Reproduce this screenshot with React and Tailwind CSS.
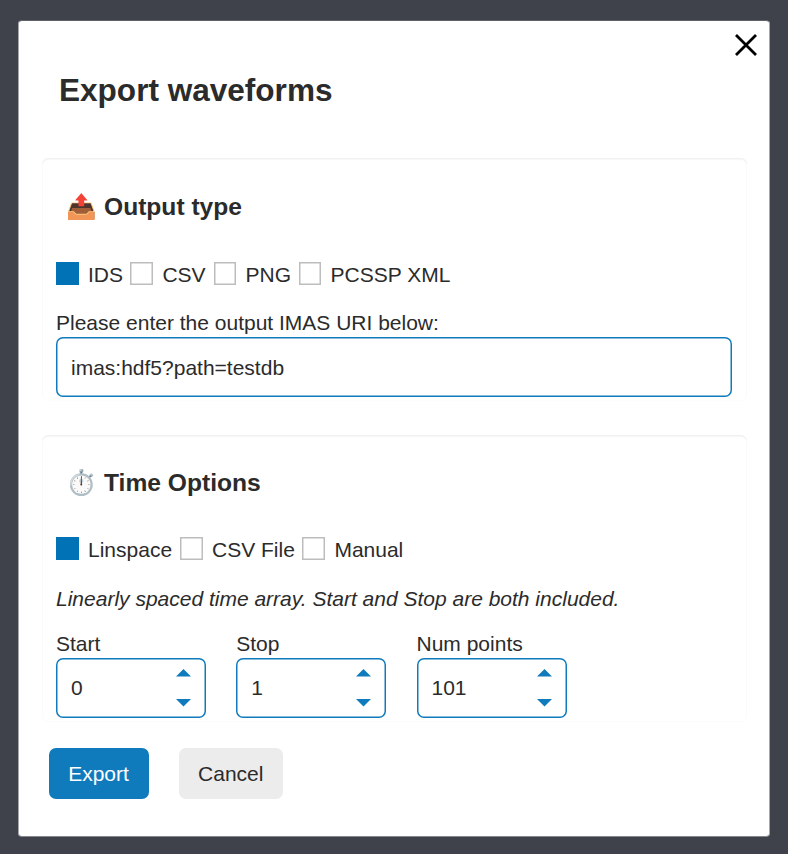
import React from "react";

function CheckItem({ label, checked, width }) {
  return (
    <label className={`flex h-[24px] shrink-0 items-start gap-[9.5px] ${width}`}>
      <span
        className={`h-[22.5px] w-[22.5px] shrink-0 ${
          checked ? "bg-[#0072b5]" : "bg-white shadow-[inset_0_0_0_1.5px_#bdbdbd]"
        }`}
      />
      <span className="whitespace-nowrap leading-[26px]">{label}</span>
    </label>
  );
}

function Card({ icon, title, className, children }) {
  return (
    <section
      className={`rounded-[6px] px-[14.5px] shadow-[inset_0_1.5px_1.5px_#f0f0f0,inset_0_0_0_1px_#fcfcfc] ${className}`}
    >
      <h2 className="flex h-[30px] items-center pl-[10px] text-[24.6px] font-bold leading-[30px]">
        <span className="flex w-[38px] shrink-0">{icon}</span>
        {title}
      </h2>
      {children}
    </section>
  );
}

function Spinner({ label, value }) {
  return (
    <div className="w-[150px]">
      <div className="h-[24px] whitespace-nowrap leading-[25px]">{label}</div>
      <div className="mt-[3px] flex h-[60px] items-center justify-between rounded-[7px] pl-[15px] pr-[15px] shadow-[inset_0_0_0_1.5px_#107bbc]">
        <span>{value}</span>
        <div className="flex flex-col gap-[22.5px]">
          <svg width="15" height="7.5" viewBox="0 0 15 7.5" fill="#107bbc">
            <path d="M0 7.5 7.5 0 15 7.5z" />
          </svg>
          <svg width="15" height="7.5" viewBox="0 0 15 7.5" fill="#107bbc">
            <path d="M0 0h15L7.5 7.5z" />
          </svg>
        </div>
      </div>
    </div>
  );
}

export default function App() {
  return (
    <div className="h-[854px] w-[788px] bg-[#40424b] px-[18px] pt-[20px] font-['Liberation_Sans',Arial,sans-serif] text-[21px] text-[#2b2b2b]">
      <main className="relative h-[817px] rounded-[4px] border border-b-[#85878d] border-l-[#a5a7ad] border-r-[#a5a7ad] border-t-[#5f616a] bg-white px-[22.5px] pt-[49px]">
        <button className="absolute right-[11px] top-[12px]" aria-label="Close">
          <svg width="24" height="24" viewBox="0 0 24 24" fill="none" stroke="#000" strokeWidth="2.8">
            <path d="M2 2 22 22M22 2 2 22" />
          </svg>
        </button>
        <h1 className="h-[40px] pl-[17.5px] text-[31.55px] font-bold leading-[40px]">Export waveforms</h1>

        <Card icon="📤" title="Output type" className="mt-[48px] h-[243px] pt-[34px]">
          <div className="mt-[40px] flex">
            <CheckItem label="IDS" checked width="w-[74.4px]" />
            <CheckItem label="CSV" width="w-[83.2px]" />
            <CheckItem label="PNG" width="w-[85px]" />
            <CheckItem label="PCSSP XML" width="w-[160px]" />
          </div>
          <div className="mt-[24px] h-[24px] leading-[26px]">Please enter the output IMAS URI below:</div>
          <div className="mt-[3px] flex h-[60px] items-center rounded-[7px] px-[15px] pt-px shadow-[inset_0_0_0_1.5px_#107bbc]">
            imas:hdf5?path=testdb
          </div>
        </Card>

        <Card icon="⏱️" title="Time Options" className="mt-[33.5px] h-[287px] pt-[33px]">
          <div className="mt-[39.5px] flex">
            <CheckItem label="Linspace" checked width="w-[124px]" />
            <CheckItem label="CSV File" width="w-[122.4px]" />
            <CheckItem label="Manual" width="w-[120px]" />
          </div>
          <div className="mt-[24.5px] h-[24px] italic leading-[25px]">
            Linearly spaced time array. Start and Stop are both included.
          </div>
          <div className="mt-[21.5px] flex gap-[30.25px]">
            <Spinner label="Start" value="0" />
            <Spinner label="Stop" value="1" />
            <Spinner label="Num points" value="101" />
          </div>
        </Card>

        <div className="ml-[7px] mt-[26px] flex gap-[30px]">
          <button className="h-[51px] w-[100px] rounded-[7px] bg-[#107bbc] pt-px text-white">Export</button>
          <button className="h-[51px] w-[104.5px] rounded-[7px] bg-[#ececec] pt-px">Cancel</button>
        </div>
      </main>
    </div>
  );
}
